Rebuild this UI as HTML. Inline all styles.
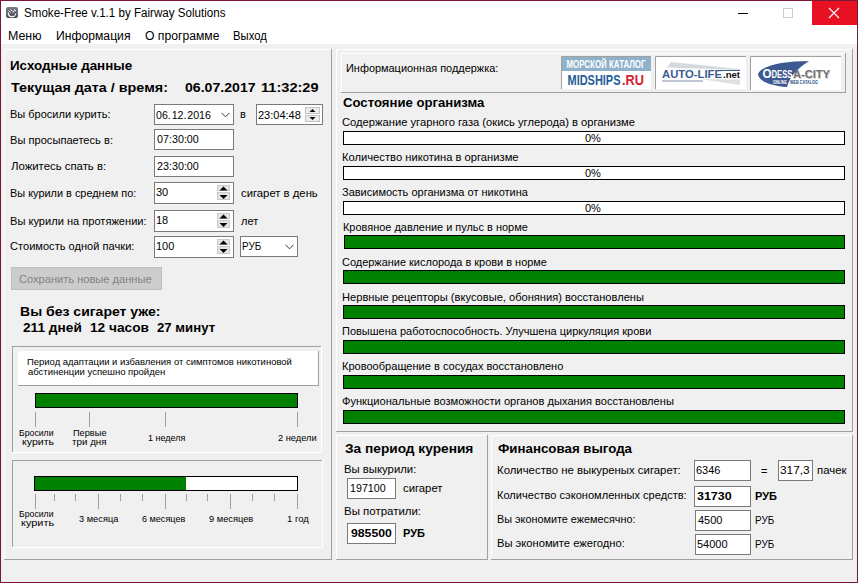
<!DOCTYPE html><html><head><meta charset="utf-8"><style>
html,body{margin:0;padding:0;width:858px;height:583px;overflow:hidden;background:#f0f0f0}
body>div,body>svg{position:absolute}
.t{position:absolute;white-space:pre;font-family:"Liberation Sans",sans-serif;transform-origin:0 0}
</style></head><body>
<div style="left:0px;top:0px;width:858px;height:583px;background:#7a1734"></div>
<div style="left:1px;top:1px;width:856px;height:581px;background:#f0f0f0"></div>
<div style="left:1px;top:1px;width:856px;height:43px;background:#fff"></div>
<div style="left:812px;top:1px;width:45px;height:24px;background:#e81123"></div>
<svg style="left:828px;top:7px" width="12" height="12" viewBox="0 0 12 12"><path d="M1 1 L11 11 M11 1 L1 11" stroke="#fff" stroke-width="1.1"/></svg>
<div style="left:783px;top:8px;width:10px;height:10px;border:1px solid #cccccc;box-sizing:border-box"></div>
<div style="left:738px;top:13px;width:10px;height:1px;background:#000"></div>
<svg style="left:6px;top:7px" width="12" height="11" viewBox="0 0 12 11"><defs><linearGradient id="ig" x1="0" y1="0" x2="0" y2="1"><stop offset="0" stop-color="#7a7d86"/><stop offset="1" stop-color="#4b4e57"/></linearGradient></defs><rect x="0" y="0" width="12" height="11" rx="2" fill="url(#ig)"/><path d="M2.3 5.5 A3.7 3.7 0 0 0 9.7 6.5" fill="none" stroke="#fff" stroke-width="1.2"/><path d="M2.5 3.5 L4.5 5.5 M4.5 2.5 L6.5 4.5 M7 5.5 L8.5 3 M8.5 2.5 L10 4" fill="none" stroke="#fff" stroke-width="0.9"/><path d="M4 8 H8.5" stroke="#5a5d66" stroke-width="1"/></svg>
<div style="left:4px;top:49px;width:328px;height:1px;background:#fff"></div>
<div style="left:4px;top:49px;width:1px;height:511px;background:#fff"></div>
<div style="left:4px;top:559px;width:328px;height:1px;background:#a0a0a0"></div>
<div style="left:331px;top:49px;width:1px;height:511px;background:#a0a0a0"></div>
<div style="left:154px;top:104px;width:80px;height:21px;background:#fff;border:1px solid #7a7a7a;box-sizing:border-box"></div>
<svg style="left:221px;top:112px" width="9" height="6" viewBox="0 0 9 6"><path d="M0.5 0.8 L4.5 4.8 L8.5 0.8" fill="none" stroke="#333" stroke-width="1"/></svg>
<div style="left:256px;top:104px;width:67px;height:21px;background:#fff;border:1px solid #7a7a7a;box-sizing:border-box"></div>
<svg style="left:305px;top:107px" width="15" height="15" viewBox="0 0 15 15"><rect x="0.5" y="0.5" width="14" height="6" fill="#ebebeb" stroke="#c4c4c4"/><rect x="0.5" y="8.5" width="14" height="6" fill="#ebebeb" stroke="#c4c4c4"/><path d="M4.5 5 L10.5 5 L7.5 2 Z" fill="#000"/><path d="M4.5 10 L10.5 10 L7.5 13 Z" fill="#000"/></svg>
<div style="left:154px;top:129px;width:80px;height:21px;background:#fff;border:1px solid #7a7a7a;box-sizing:border-box"></div>
<div style="left:154px;top:156px;width:80px;height:21px;background:#fff;border:1px solid #7a7a7a;box-sizing:border-box"></div>
<div style="left:154px;top:182px;width:80px;height:22px;background:#fff;border:1px solid #7a7a7a;box-sizing:border-box"></div>
<svg style="left:217px;top:185px" width="13" height="15" viewBox="0 0 13 15"><rect x="0.5" y="0.5" width="12" height="5" fill="#e5e5e5" stroke="#c9c9c9"/><rect x="0.5" y="7.5" width="12" height="7" fill="#e5e5e5" stroke="#c9c9c9"/><path d="M2.5 5.5 L10.5 5.5 L6.5 1.5 Z" fill="#000"/><path d="M2.5 10 L10.5 10 L6.5 14 Z" fill="#000"/></svg>
<div style="left:154px;top:210px;width:80px;height:22px;background:#fff;border:1px solid #7a7a7a;box-sizing:border-box"></div>
<svg style="left:217px;top:213px" width="13" height="15" viewBox="0 0 13 15"><rect x="0.5" y="0.5" width="12" height="5" fill="#e5e5e5" stroke="#c9c9c9"/><rect x="0.5" y="7.5" width="12" height="7" fill="#e5e5e5" stroke="#c9c9c9"/><path d="M2.5 5.5 L10.5 5.5 L6.5 1.5 Z" fill="#000"/><path d="M2.5 10 L10.5 10 L6.5 14 Z" fill="#000"/></svg>
<div style="left:154px;top:236px;width:80px;height:22px;background:#fff;border:1px solid #7a7a7a;box-sizing:border-box"></div>
<svg style="left:217px;top:239px" width="13" height="15" viewBox="0 0 13 15"><rect x="0.5" y="0.5" width="12" height="5" fill="#e5e5e5" stroke="#c9c9c9"/><rect x="0.5" y="7.5" width="12" height="7" fill="#e5e5e5" stroke="#c9c9c9"/><path d="M2.5 5.5 L10.5 5.5 L6.5 1.5 Z" fill="#000"/><path d="M2.5 10 L10.5 10 L6.5 14 Z" fill="#000"/></svg>
<div style="left:240px;top:236px;width:58px;height:21px;background:#fff;border:1px solid #7a7a7a;box-sizing:border-box"></div>
<svg style="left:285px;top:244px" width="9" height="6" viewBox="0 0 9 6"><path d="M0.5 0.8 L4.5 4.8 L8.5 0.8" fill="none" stroke="#333" stroke-width="1"/></svg>
<div style="left:11px;top:267px;width:151px;height:23px;background:#cccccc;border:1px solid #bfbfbf;box-sizing:border-box"></div>
<div style="left:12px;top:346px;width:310px;height:1px;background:#a0a0a0"></div>
<div style="left:12px;top:346px;width:1px;height:107px;background:#a0a0a0"></div>
<div style="left:12px;top:452px;width:310px;height:1px;background:#fff"></div>
<div style="left:321px;top:346px;width:1px;height:107px;background:#fff"></div>
<div style="left:18px;top:351px;width:301px;height:35px;background:#fff;border-right:1px solid #a0a0a0;border-bottom:1px solid #a0a0a0;box-sizing:border-box"></div>
<div style="left:35px;top:393px;width:263px;height:15px;background:#008000;border:1px solid #000;box-sizing:border-box"></div>
<div style="left:35px;top:412px;width:1px;height:15px;background:#a0a0a0"></div>
<div style="left:89px;top:412px;width:1px;height:15px;background:#a0a0a0"></div>
<div style="left:165px;top:412px;width:1px;height:15px;background:#a0a0a0"></div>
<div style="left:297px;top:412px;width:1px;height:15px;background:#a0a0a0"></div>
<div style="left:12px;top:460px;width:311px;height:1px;background:#a0a0a0"></div>
<div style="left:12px;top:460px;width:1px;height:88px;background:#a0a0a0"></div>
<div style="left:12px;top:547px;width:311px;height:1px;background:#fff"></div>
<div style="left:322px;top:460px;width:1px;height:88px;background:#fff"></div>
<div style="left:34px;top:476px;width:264px;height:15px;background:#fff;border:1px solid #000;box-sizing:border-box"></div>
<div style="left:35px;top:477px;width:151px;height:13px;background:#008000"></div>
<div style="left:35px;top:494px;width:1px;height:15px;background:#a0a0a0"></div>
<div style="left:54px;top:494px;width:1px;height:7px;background:#a0a0a0"></div>
<div style="left:75px;top:494px;width:1px;height:7px;background:#a0a0a0"></div>
<div style="left:98px;top:494px;width:1px;height:15px;background:#a0a0a0"></div>
<div style="left:120px;top:494px;width:1px;height:7px;background:#a0a0a0"></div>
<div style="left:142px;top:494px;width:1px;height:7px;background:#a0a0a0"></div>
<div style="left:165px;top:494px;width:1px;height:15px;background:#a0a0a0"></div>
<div style="left:186px;top:494px;width:1px;height:7px;background:#a0a0a0"></div>
<div style="left:207px;top:494px;width:1px;height:7px;background:#a0a0a0"></div>
<div style="left:230px;top:494px;width:1px;height:15px;background:#a0a0a0"></div>
<div style="left:252px;top:494px;width:1px;height:7px;background:#a0a0a0"></div>
<div style="left:274px;top:494px;width:1px;height:7px;background:#a0a0a0"></div>
<div style="left:297px;top:494px;width:1px;height:15px;background:#a0a0a0"></div>
<div style="left:336px;top:49px;width:517px;height:1px;background:#fff"></div>
<div style="left:336px;top:49px;width:1px;height:383px;background:#fff"></div>
<div style="left:336px;top:431px;width:517px;height:1px;background:#a0a0a0"></div>
<div style="left:852px;top:49px;width:1px;height:383px;background:#a0a0a0"></div>
<div style="left:341px;top:53px;width:505px;height:1px;background:#fff"></div>
<div style="left:341px;top:53px;width:1px;height:40px;background:#fff"></div>
<div style="left:341px;top:92px;width:505px;height:1px;background:#a0a0a0"></div>
<div style="left:845px;top:53px;width:1px;height:40px;background:#a0a0a0"></div>
<svg style="left:561px;top:56px" width="90" height="33" viewBox="0 0 90 33"><rect x="0" y="0" width="90" height="33" fill="#fff"/><rect x="1" y="1" width="89" height="14" fill="#8fb1ca"/><text x="5.5" y="11.8" font-family="Liberation Sans" font-weight="bold" font-size="10.5" fill="#fff" textLength="79" lengthAdjust="spacingAndGlyphs">МОРСКОЙ КАТАЛОГ</text><text x="6.5" y="28.8" font-family="Liberation Sans" font-weight="bold" font-size="15.5" fill="#245e97" textLength="53" lengthAdjust="spacingAndGlyphs">MIDSHIPS</text><text x="61" y="28.8" font-family="Liberation Sans" font-weight="bold" font-size="15.5" fill="#d6202f" textLength="22" lengthAdjust="spacingAndGlyphs">.RU</text><path d="M0.5 33 V0.5 H90" fill="none" stroke="#a0a0a0"/></svg>
<svg style="left:655px;top:56px" width="91" height="33" viewBox="0 0 91 33"><rect x="0" y="0" width="91" height="33" fill="#fff"/><path d="M12 11.5 L16 6 L85 13 L85 14 Z" fill="#d6d9df"/><path d="M45 23 L85 23.5 L85 29 Z" fill="#e0e0e0"/><path d="M62 14 H85 V15 H62 Z" fill="#3b5b91"/><text x="7" y="21.9" font-family="Liberation Sans" font-weight="bold" font-size="11" fill="#3b5b91" textLength="60" lengthAdjust="spacingAndGlyphs">AUTO-LIFE</text><text x="68" y="21.8" font-family="Liberation Sans" font-weight="bold" font-size="9.5" fill="#111" textLength="17" lengthAdjust="spacingAndGlyphs">.net</text><rect x="7" y="24" width="41" height="2" fill="#c0c6d2"/><path d="M0.5 33 V0.5 H91" fill="none" stroke="#a0a0a0"/></svg>
<svg style="left:750px;top:56px" width="91" height="34" viewBox="0 0 91 34"><rect x="0" y="0" width="91" height="34" fill="#fff"/><path d="M8 18 C12 9 35 5 59 5 C48 12 40 20 37 31 C22 30 9 26 8 18 Z" fill="#3c5a91"/><text x="12.5" y="22.2" font-family="Liberation Sans" font-weight="bold" font-size="12.5" fill="#fff" textLength="9" lengthAdjust="spacingAndGlyphs">O</text><text x="21.5" y="22.2" font-family="Liberation Sans" font-weight="bold" font-size="10.5" fill="#fff" textLength="21" lengthAdjust="spacingAndGlyphs">DESS</text><text x="43.8" y="22.8" font-family="Liberation Sans" font-weight="bold" font-size="10.5" fill="#cfcfcf" textLength="37" lengthAdjust="spacingAndGlyphs">A-CITY</text><text x="43" y="22.2" font-family="Liberation Sans" font-weight="bold" font-size="10.5" fill="#6f6f6f" textLength="37" lengthAdjust="spacingAndGlyphs">A-CITY</text><text x="23" y="27.5" font-family="Liberation Sans" font-weight="bold" font-size="4.5" fill="#fff" textLength="14" lengthAdjust="spacingAndGlyphs">ONLINE</text><text x="40" y="27.5" font-family="Liberation Sans" font-weight="bold" font-size="4.5" fill="#2c4c85" textLength="28" lengthAdjust="spacingAndGlyphs">WEB CATALOG</text><path d="M0.5 34 V0.5 H91" fill="none" stroke="#a0a0a0"/></svg>
<div style="left:343px;top:131px;width:502px;height:14px;background:#fff;border:1px solid #000;box-sizing:border-box"></div>
<div style="left:343px;top:166px;width:502px;height:14px;background:#fff;border:1px solid #000;box-sizing:border-box"></div>
<div style="left:343px;top:201px;width:502px;height:14px;background:#fff;border:1px solid #000;box-sizing:border-box"></div>
<div style="left:344px;top:235px;width:501px;height:14px;background:#008000;border:1px solid #000;box-sizing:border-box"></div>
<div style="left:343px;top:270px;width:502px;height:14px;background:#008000;border:1px solid #000;box-sizing:border-box"></div>
<div style="left:343px;top:305px;width:502px;height:14px;background:#008000;border:1px solid #000;box-sizing:border-box"></div>
<div style="left:343px;top:340px;width:502px;height:14px;background:#008000;border:1px solid #000;box-sizing:border-box"></div>
<div style="left:343px;top:375px;width:502px;height:14px;background:#008000;border:1px solid #000;box-sizing:border-box"></div>
<div style="left:343px;top:410px;width:502px;height:14px;background:#008000;border:1px solid #000;box-sizing:border-box"></div>
<div style="left:336px;top:435px;width:152px;height:1px;background:#fff"></div>
<div style="left:336px;top:435px;width:1px;height:125px;background:#fff"></div>
<div style="left:336px;top:559px;width:152px;height:1px;background:#a0a0a0"></div>
<div style="left:487px;top:435px;width:1px;height:125px;background:#a0a0a0"></div>
<div style="left:347px;top:478px;width:49px;height:21px;background:#fff;border:1px solid #7a7a7a;box-sizing:border-box"></div>
<div style="left:347px;top:523px;width:49px;height:21px;background:#fff;border:1px solid #7a7a7a;box-sizing:border-box"></div>
<div style="left:491px;top:435px;width:362px;height:1px;background:#fff"></div>
<div style="left:491px;top:435px;width:1px;height:125px;background:#fff"></div>
<div style="left:491px;top:559px;width:362px;height:1px;background:#a0a0a0"></div>
<div style="left:852px;top:435px;width:1px;height:125px;background:#a0a0a0"></div>
<div style="left:694px;top:460px;width:57px;height:21px;background:#fff;border:1px solid #7a7a7a;box-sizing:border-box"></div>
<div style="left:778px;top:460px;width:35px;height:21px;background:#fff;border:1px solid #7a7a7a;box-sizing:border-box"></div>
<div style="left:694px;top:486px;width:57px;height:21px;background:#fff;border:1px solid #7a7a7a;box-sizing:border-box"></div>
<div style="left:695px;top:510px;width:56px;height:21px;background:#fff;border:1px solid #7a7a7a;box-sizing:border-box"></div>
<div style="left:695px;top:534px;width:56px;height:21px;background:#fff;border:1px solid #7a7a7a;box-sizing:border-box"></div>
<div class="t" id="t0" style="left:24.03px;top:7px;font-size:12px;line-height:12px;color:#000;transform:scaleX(0.9662);">Smoke-Free v.1.1 by Fairway Solutions</div>
<div class="t" id="t1" style="left:7.97px;top:30px;font-size:12px;line-height:12px;color:#000;transform:scaleX(1.0323);">Меню</div>
<div class="t" id="t2" style="left:55.99px;top:30px;font-size:12px;line-height:12px;color:#000;transform:scaleX(1.0139);">Информация</div>
<div class="t" id="t3" style="left:145.00px;top:30px;font-size:12px;line-height:12px;color:#000;transform:scaleX(1.0137);">О программе</div>
<div class="t" id="t4" style="left:233.06px;top:30px;font-size:12px;line-height:12px;color:#000;transform:scaleX(0.9429);">Выход</div>
<div class="t" id="t5" style="left:9.93px;top:60px;font-size:12.5px;line-height:12.5px;font-weight:bold;color:#000;transform:scaleX(1.0708);">Исходные данные</div>
<div class="t" id="t6" style="left:11.00px;top:82px;font-size:12.5px;line-height:12.5px;font-weight:bold;color:#000;transform:scaleX(1.1471);">Текущая дата / время:</div>
<div class="t" id="t7" style="left:185.00px;top:82px;font-size:12.5px;line-height:12.5px;font-weight:bold;color:#000;transform:scaleX(1.1290);">06.07.2017</div>
<div class="t" id="t8" style="left:260.83px;top:82px;font-size:12.5px;line-height:12.5px;font-weight:bold;color:#000;transform:scaleX(1.1667);">11:32:29</div>
<div class="t" id="t9" style="left:10.00px;top:109px;font-size:11px;line-height:11px;color:#000;">Вы бросили курить:</div>
<div class="t" id="t10" style="left:9.99px;top:135px;font-size:11px;line-height:11px;color:#000;transform:scaleX(1.0100);">Вы просыпаетесь в:</div>
<div class="t" id="t11" style="left:11.00px;top:161px;font-size:11px;line-height:11px;color:#000;transform:scaleX(1.0330);">Ложитесь спать в:</div>
<div class="t" id="t12" style="left:10.01px;top:188px;font-size:11px;line-height:11px;color:#000;transform:scaleX(0.9921);">Вы курили в среднем по:</div>
<div class="t" id="t13" style="left:9.99px;top:216px;font-size:11px;line-height:11px;color:#000;transform:scaleX(1.0075);">Вы курили на протяжении:</div>
<div class="t" id="t14" style="left:9.99px;top:241px;font-size:11px;line-height:11px;color:#000;transform:scaleX(1.0082);">Стоимость одной пачки:</div>
<div class="t" id="t15" style="left:156.00px;top:110px;font-size:11px;line-height:11px;color:#000;transform:scaleX(0.9649);">06. 12. 2016</div>
<div class="t" id="t16" style="left:240.00px;top:109px;font-size:11px;line-height:11px;color:#000;">в</div>
<div class="t" id="t17" style="left:258.00px;top:110px;font-size:11px;line-height:11px;color:#000;">23:04:48</div>
<div class="t" id="t18" style="left:157.00px;top:134px;font-size:11px;line-height:11px;color:#000;transform:scaleX(0.9767);">07:30:00</div>
<div class="t" id="t19" style="left:157.00px;top:161px;font-size:11px;line-height:11px;color:#000;transform:scaleX(0.9767);">23:30:00</div>
<div class="t" id="t20" style="left:156.00px;top:187px;font-size:11px;line-height:11px;color:#000;">30</div>
<div class="t" id="t21" style="left:241.00px;top:188px;font-size:11px;line-height:11px;color:#000;transform:scaleX(1.0270);">сигарет в день</div>
<div class="t" id="t22" style="left:156.00px;top:215px;font-size:11px;line-height:11px;color:#000;">18</div>
<div class="t" id="t23" style="left:241.00px;top:216px;font-size:11px;line-height:11px;color:#000;">лет</div>
<div class="t" id="t24" style="left:156.00px;top:241px;font-size:11px;line-height:11px;color:#000;">100</div>
<div class="t" id="t25" style="left:242.10px;top:241px;font-size:11px;line-height:11px;color:#000;transform:scaleX(0.9000);">РУБ</div>
<div class="t" id="t26" style="left:18.99px;top:274px;font-size:11px;line-height:11px;color:#838383;transform:scaleX(1.0077);">Сохранить новые данные</div>
<div class="t" id="t27" style="left:19.88px;top:306px;font-size:12.5px;line-height:12.5px;font-weight:bold;color:#000;transform:scaleX(1.1220);">Вы без сигарет уже:</div>
<div class="t" id="t28" style="left:23.00px;top:322px;font-size:12.5px;line-height:12.5px;font-weight:bold;color:#000;transform:scaleX(1.0943);">211 дней</div>
<div class="t" id="t29" style="left:89.91px;top:322px;font-size:12.5px;line-height:12.5px;font-weight:bold;color:#000;transform:scaleX(1.0943);">12 часов</div>
<div class="t" id="t30" style="left:157.00px;top:322px;font-size:12.5px;line-height:12.5px;font-weight:bold;color:#000;transform:scaleX(1.0545);">27 минут</div>
<div class="t" id="t31" style="left:27.00px;top:357px;font-size:9.5px;line-height:9.5px;color:#000;transform:scaleX(0.9962);">Период адаптации и избавления от симптомов никотиновой</div>
<div class="t" id="t32" style="left:28.00px;top:367px;font-size:9.5px;line-height:9.5px;color:#000;">абстиненции успешно пройден</div>
<div class="t" id="t33" style="left:19.08px;top:428px;font-size:9.5px;line-height:9.5px;color:#000;transform:scaleX(0.9167);">Бросили</div>
<div class="t" id="t34" style="left:21.89px;top:437px;font-size:9.5px;line-height:9.5px;color:#000;transform:scaleX(1.1111);">курить</div>
<div class="t" id="t35" style="left:73.03px;top:428px;font-size:9.5px;line-height:9.5px;color:#000;transform:scaleX(0.9697);">Первые</div>
<div class="t" id="t36" style="left:71.97px;top:437px;font-size:9.5px;line-height:9.5px;color:#000;transform:scaleX(1.0312);">три дня</div>
<div class="t" id="t37" style="left:148.05px;top:433px;font-size:9.5px;line-height:9.5px;color:#000;transform:scaleX(0.9474);">1 неделя</div>
<div class="t" id="t38" style="left:278.00px;top:433px;font-size:9.5px;line-height:9.5px;color:#000;transform:scaleX(0.9744);">2 недели</div>
<div class="t" id="t39" style="left:19.08px;top:509px;font-size:9.5px;line-height:9.5px;color:#000;transform:scaleX(0.9167);">Бросили</div>
<div class="t" id="t40" style="left:20.85px;top:518px;font-size:9.5px;line-height:9.5px;color:#000;transform:scaleX(1.1481);">курить</div>
<div class="t" id="t41" style="left:79.00px;top:514px;font-size:9.5px;line-height:9.5px;color:#000;transform:scaleX(0.9750);">3 месяца</div>
<div class="t" id="t42" style="left:142.00px;top:514px;font-size:9.5px;line-height:9.5px;color:#000;transform:scaleX(0.9556);">6 месяцев</div>
<div class="t" id="t43" style="left:209.00px;top:514px;font-size:9.5px;line-height:9.5px;color:#000;transform:scaleX(0.9778);">9 месяцев</div>
<div class="t" id="t44" style="left:287.00px;top:514px;font-size:9.5px;line-height:9.5px;color:#000;">1 год</div>
<div class="t" id="t45" style="left:346.01px;top:63px;font-size:11px;line-height:11px;color:#000;transform:scaleX(0.9934);">Информационная поддержка:</div>
<div class="t" id="t46" style="left:343.00px;top:97px;font-size:12.5px;line-height:12.5px;font-weight:bold;color:#000;transform:scaleX(1.0519);">Состояние организма</div>
<div class="t" id="t47" style="left:341.98px;top:117px;font-size:11px;line-height:11px;color:#000;transform:scaleX(1.0174);">Содержание угарного газа (окись углерода) в организме</div>
<div class="t" id="t48" style="left:585.00px;top:133px;font-size:11px;line-height:11px;color:#000;">0%</div>
<div class="t" id="t49" style="left:341.98px;top:152px;font-size:11px;line-height:11px;color:#000;transform:scaleX(1.0174);">Количество никотина в организме</div>
<div class="t" id="t50" style="left:585.00px;top:168px;font-size:11px;line-height:11px;color:#000;">0%</div>
<div class="t" id="t51" style="left:342.00px;top:187px;font-size:11px;line-height:11px;color:#000;">Зависимость организма от никотина</div>
<div class="t" id="t52" style="left:585.00px;top:203px;font-size:11px;line-height:11px;color:#000;">0%</div>
<div class="t" id="t53" style="left:343.01px;top:222px;font-size:11px;line-height:11px;color:#000;transform:scaleX(0.9946);">Кровяное давление и пульс в норме</div>
<div class="t" id="t54" style="left:342.00px;top:257px;font-size:11px;line-height:11px;color:#000;transform:scaleX(0.9951);">Содержание кислорода в крови в норме</div>
<div class="t" id="t55" style="left:341.99px;top:292px;font-size:11px;line-height:11px;color:#000;transform:scaleX(1.0101);">Нервные рецепторы (вкусовые, обоняния) восстановлены</div>
<div class="t" id="t56" style="left:342.00px;top:326px;font-size:11px;line-height:11px;color:#000;">Повышена работоспособность. Улучшена циркуляция крови</div>
<div class="t" id="t57" style="left:342.00px;top:361px;font-size:11px;line-height:11px;color:#000;transform:scaleX(1.0046);">Кровообращение в сосудах восстановлено</div>
<div class="t" id="t58" style="left:341.99px;top:396px;font-size:11px;line-height:11px;color:#000;transform:scaleX(1.0092);">Функциональные возможности органов дыхания восстановлены</div>
<div class="t" id="t59" style="left:344.90px;top:443px;font-size:12.5px;line-height:12.5px;font-weight:bold;color:#000;transform:scaleX(1.0957);">За период курения</div>
<div class="t" id="t60" style="left:343.97px;top:464px;font-size:11px;line-height:11px;color:#000;transform:scaleX(1.0290);">Вы выкурили:</div>
<div class="t" id="t61" style="left:350.03px;top:483px;font-size:11px;line-height:11px;color:#000;transform:scaleX(0.9714);">197100</div>
<div class="t" id="t62" style="left:403.00px;top:483px;font-size:11px;line-height:11px;color:#000;transform:scaleX(1.0263);">сигарет</div>
<div class="t" id="t63" style="left:343.96px;top:506px;font-size:11px;line-height:11px;color:#000;transform:scaleX(1.0417);">Вы потратили:</div>
<div class="t" id="t64" style="left:351.00px;top:528px;font-size:11px;line-height:11px;font-weight:bold;color:#000;transform:scaleX(1.1111);">985500</div>
<div class="t" id="t65" style="left:403.00px;top:528px;font-size:11px;line-height:11px;font-weight:bold;color:#000;">РУБ</div>
<div class="t" id="t66" style="left:498.00px;top:443px;font-size:12.5px;line-height:12.5px;font-weight:bold;color:#000;transform:scaleX(1.0635);">Финансовая выгода</div>
<div class="t" id="t67" style="left:496.97px;top:465px;font-size:11px;line-height:11px;color:#000;transform:scaleX(1.0341);">Количество не выкуреных сигарет:</div>
<div class="t" id="t68" style="left:496.99px;top:490px;font-size:11px;line-height:11px;color:#000;transform:scaleX(1.0053);">Количество сэкономленных средств:</div>
<div class="t" id="t69" style="left:497.01px;top:514px;font-size:11px;line-height:11px;color:#000;transform:scaleX(0.9856);">Вы экономите ежемесячно:</div>
<div class="t" id="t70" style="left:496.98px;top:538px;font-size:11px;line-height:11px;color:#000;transform:scaleX(1.0161);">Вы экономите ежегодно:</div>
<div class="t" id="t71" style="left:696.00px;top:465px;font-size:11px;line-height:11px;color:#000;">6346</div>
<div class="t" id="t72" style="left:761.00px;top:466px;font-size:11px;line-height:11px;color:#000;">=</div>
<div class="t" id="t73" style="left:779.92px;top:465px;font-size:11px;line-height:11px;color:#000;transform:scaleX(1.0769);">317,3</div>
<div class="t" id="t74" style="left:816.96px;top:465px;font-size:11px;line-height:11px;color:#000;transform:scaleX(1.0357);">пачек</div>
<div class="t" id="t75" style="left:697.00px;top:491px;font-size:11px;line-height:11px;font-weight:bold;color:#000;transform:scaleX(1.1333);">31730</div>
<div class="t" id="t76" style="left:755.00px;top:491px;font-size:11px;line-height:11px;font-weight:bold;color:#000;">РУБ</div>
<div class="t" id="t77" style="left:698.00px;top:515px;font-size:11px;line-height:11px;color:#000;">4500</div>
<div class="t" id="t78" style="left:755.10px;top:515px;font-size:11px;line-height:11px;color:#000;transform:scaleX(0.9000);">РУБ</div>
<div class="t" id="t79" style="left:697.00px;top:539px;font-size:11px;line-height:11px;color:#000;">54000</div>
<div class="t" id="t80" style="left:755.10px;top:539px;font-size:11px;line-height:11px;color:#000;transform:scaleX(0.9000);">РУБ</div>
</body></html>
